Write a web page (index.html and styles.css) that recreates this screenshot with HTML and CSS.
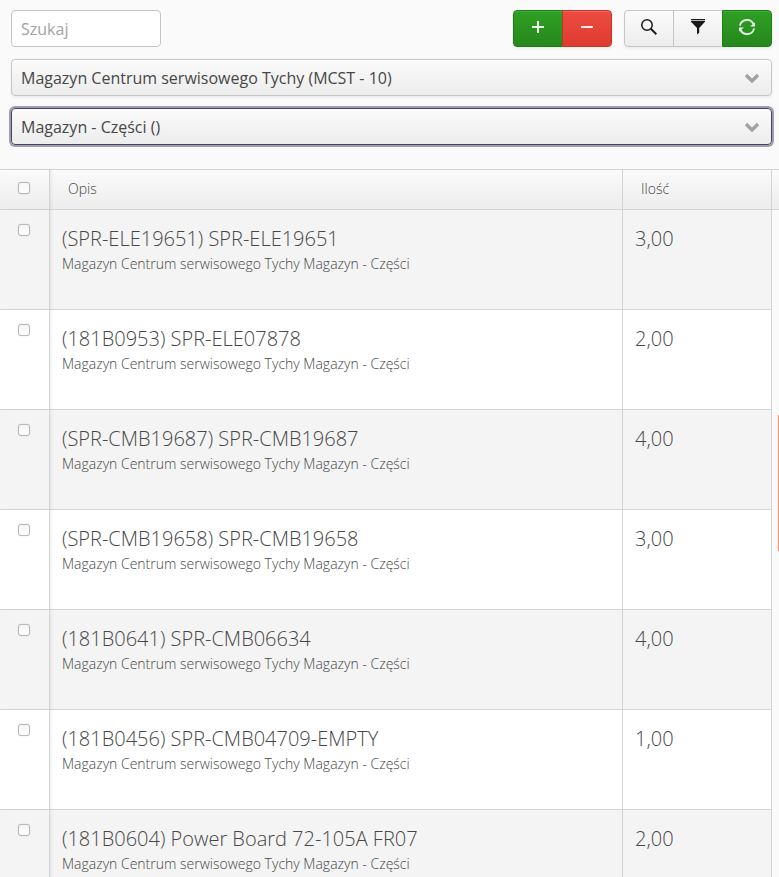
FILE: index.html
```html
<!DOCTYPE html>
<html lang="pl">

<head>
    <meta charset="UTF-8">
    <meta name="viewport" content="width=device-width, initial-scale=1.0">
    <title>Magazyn</title>
    <link rel="stylesheet" href="styles.css">
</head>

<body>
    <div class="filters">
        <div class="toolbar">
            <input type="text" class="search" placeholder="Szukaj" aria-label="Szukaj">
            <div class="button-groups">
                <div class="button-group">
                    <button type="button" class="button friendly" aria-label="Dodaj">
                        <svg class="icon" viewBox="0 0 16 16"><path d="M8 2v12M2 8h12" fill="none" stroke="currentColor" stroke-width="2"/></svg>
                    </button>
                    <button type="button" class="button danger" aria-label="Usuń">
                        <svg class="icon" viewBox="0 0 16 16"><path d="M2 8h12" fill="none" stroke="currentColor" stroke-width="2"/></svg>
                    </button>
                </div>
                <div class="button-group">
                    <button type="button" class="button" aria-label="Wyszukaj">
                        <svg class="icon" viewBox="0 0 16 16"><circle cx="6" cy="6" r="5.2" fill="none" stroke="currentColor" stroke-width="1.5"/><path d="M9.8 9.8l5.6 5.4" fill="none" stroke="currentColor" stroke-width="2"/></svg>
                    </button>
                    <button type="button" class="button" aria-label="Filtruj">
                        <svg class="icon" viewBox="0 0 16 16"><path d="M1 0h14v1.2H1zM1 2h14v.8L9.2 9v4.8L7 15.5V9L1 2.8z" fill="currentColor"/></svg>
                    </button>
                    <button type="button" class="button friendly" aria-label="Odśwież">
                        <svg class="icon" viewBox="0 0 16 16"><path d="M.9 6.6A7.2 7.2 0 0 1 14.4 5M15.1 9.4A7.2 7.2 0 0 1 1.6 11" fill="none" stroke="currentColor" stroke-width="1.8"/><path d="M16 3.4v4h-5zM0 12.6v-4h5z" fill="currentColor"/></svg>
                    </button>
                </div>
            </div>
        </div>
        <div class="select-box">
            <select class="select" aria-label="Magazyn">
                <option>Magazyn Centrum serwisowego Tychy (MCST - 10)</option>
            </select>
            <svg class="chevron" viewBox="0 0 16 10"><path d="M2 2l6 6 6-6" fill="none" stroke="currentColor" stroke-width="3.4"/></svg>
        </div>
        <div class="select-box">
            <select class="select focused" aria-label="Lokalizacja">
                <option>Magazyn - Części ()</option>
            </select>
            <svg class="chevron" viewBox="0 0 16 10"><path d="M2 2l6 6 6-6" fill="none" stroke="currentColor" stroke-width="3.4"/></svg>
        </div>
    </div>

    <table class="grid">
        <thead>
            <tr>
                <th class="col-check"><input type="checkbox" class="checkbox" aria-label="Zaznacz wszystko"></th>
                <th class="col-name">Opis</th>
                <th class="col-amount">Ilość</th>
                <td class="col-end"></td>
            </tr>
        </thead>
        <tbody>
            <tr>
                <td class="col-check"><input type="checkbox" class="checkbox" aria-label="SPR-ELE19651"></td>
                <td><div class="title">(SPR-ELE19651) SPR-ELE19651</div><div class="place">Magazyn Centrum serwisowego Tychy Magazyn - Części</div></td>
                <td class="title">3,00</td>
            </tr>
            <tr>
                <td class="col-check"><input type="checkbox" class="checkbox" aria-label="SPR-ELE07878"></td>
                <td><div class="title">(181B0953) SPR-ELE07878</div><div class="place">Magazyn Centrum serwisowego Tychy Magazyn - Części</div></td>
                <td class="title">2,00</td>
            </tr>
            <tr>
                <td class="col-check"><input type="checkbox" class="checkbox" aria-label="SPR-CMB19687"></td>
                <td><div class="title">(SPR-CMB19687) SPR-CMB19687</div><div class="place">Magazyn Centrum serwisowego Tychy Magazyn - Części</div></td>
                <td class="title">4,00</td>
            </tr>
            <tr>
                <td class="col-check"><input type="checkbox" class="checkbox" aria-label="SPR-CMB19658"></td>
                <td><div class="title">(SPR-CMB19658) SPR-CMB19658</div><div class="place">Magazyn Centrum serwisowego Tychy Magazyn - Części</div></td>
                <td class="title">3,00</td>
            </tr>
            <tr>
                <td class="col-check"><input type="checkbox" class="checkbox" aria-label="SPR-CMB06634"></td>
                <td><div class="title">(181B0641) SPR-CMB06634</div><div class="place">Magazyn Centrum serwisowego Tychy Magazyn - Części</div></td>
                <td class="title">4,00</td>
            </tr>
            <tr>
                <td class="col-check"><input type="checkbox" class="checkbox" aria-label="SPR-CMB04709-EMPTY"></td>
                <td><div class="title">(181B0456) SPR-CMB04709-EMPTY</div><div class="place">Magazyn Centrum serwisowego Tychy Magazyn - Części</div></td>
                <td class="title">1,00</td>
            </tr>
            <tr>
                <td class="col-check"><input type="checkbox" class="checkbox" aria-label="Power Board 72-105A FR07"></td>
                <td><div class="title">(181B0604) Power Board 72-105A FR07</div><div class="place">Magazyn Centrum serwisowego Tychy Magazyn - Części</div></td>
                <td class="title">2,00</td>
            </tr>
        </tbody>
    </table>

    <div class="side-tab"></div>
</body>
</html>
```

FILE: styles.css
```css
* {
    box-sizing: border-box;
}

body {
    margin: 0;
    height: 100vh;
    overflow: hidden;
    background-color: #fafafa;
    color: #474747;
    font-family: "Open Sans", sans-serif;
    font-size: 16px;
    font-weight: 300;
}

.filters {
    display: flex;
    flex-direction: column;
    gap: 12px;
    padding: 10px 7px 24px 11px;
}

.toolbar {
    display: flex;
    justify-content: space-between;
}

.search {
    width: 150px;
    height: 37px;
    padding: 0 9px;
    border: 1px solid #c5c5c5;
    border-radius: 4px;
    background: white;
    color: #474747;
    font: 400 16px "Open Sans", sans-serif;
}

.search::placeholder {
    color: #a3a3a3;
}

.button-groups {
    display: flex;
    gap: 12px;
}

.button-group {
    display: flex;
    border-radius: 4px;
    box-shadow: 0 2px 3px rgba(0, 0, 0, 0.05);
}

.button {
    display: flex;
    justify-content: center;
    width: 50px;
    height: 37px;
    padding: 8px 0 0;
    border: 1px solid #c5c5c5;
    background: linear-gradient(to bottom, #fafafa 2%, #ededed 98%);
    box-shadow: inset 0 1px 0 white;
    color: #191919;
    cursor: pointer;
}

.button + .button {
    margin-left: -1px;
}

.button:first-child {
    border-radius: 4px 0 0 4px;
}

.button:last-child {
    border-radius: 0 4px 4px 0;
}

.button.friendly {
    border-color: #1c7e17;
    background: linear-gradient(to bottom, #2f9f24 2%, #26881c 98%);
    box-shadow: inset 0 1px 0 #41af37;
    color: #eaf4e9;
}

.button.danger {
    border-color: #bb382e;
    background: linear-gradient(to bottom, #ed4b3f 2%, #de3c31 98%);
    box-shadow: inset 0 1px 0 #f1685e;
    color: #fbeeed;
}

.icon {
    width: 16px;
    height: 16px;
}

.select-box {
    position: relative;
}

.select {
    display: block;
    appearance: none;
    width: 100%;
    height: 37px;
    padding: 0 40px 0 9px;
    border: 1px solid #c5c5c5;
    border-radius: 4px;
    background: linear-gradient(to bottom, #fafafa 2%, #ededed 98%);
    box-shadow: inset 0 1px 0 white, 0 2px 3px rgba(0, 0, 0, 0.05);
    color: #474747;
    font: 400 16px "Open Sans", sans-serif;
}

.select.focused {
    border-color: #46435f;
    box-shadow: 0 0 0 2px #a09eae;
}

.chevron {
    position: absolute;
    top: 14px;
    right: 12px;
    width: 16px;
    height: 10px;
    color: #a3a3a3;
    pointer-events: none;
}

.grid {
    width: 100%;
    table-layout: fixed;
    border-collapse: separate;
    border-spacing: 0;
}

.grid thead th,
.grid thead td {
    height: 41px;
    padding: 0 18px 2px;
    border-top: 1px solid #d4d4d4;
    border-right: 1px solid #d4d4d4;
    border-bottom: 1px solid #d4d4d4;
    background: linear-gradient(to bottom, #fafafa 2%, #ededed 98%);
    font-size: 14px;
    font-weight: 300;
    line-height: 20px;
    text-align: left;
}

.grid tbody td {
    height: 100px;
    padding: 14px 12px 0;
    border-right: 1px solid #d4d4d4;
    border-bottom: 1px solid #d4d4d4;
    background-color: white;
    vertical-align: top;
}

.grid tbody tr:nth-child(odd) td {
    background-color: #f4f4f4;
}

.grid .col-check {
    position: relative;
    width: 50px;
    padding: 14px 0 0 18px;
    box-shadow: 2px 0 2px rgba(0, 0, 0, 0.05);
    vertical-align: top;
}

.grid thead .col-check {
    padding-top: 12px;
}

.grid .col-amount {
    width: 149px;
}

.grid thead .col-end {
    width: 7px;
    padding: 0;
    border-right: none;
}

.checkbox {
    display: block;
    appearance: none;
    width: 12px;
    height: 12px;
    margin: 0;
    border: 1px solid #b8b8b8;
    border-radius: 3px;
    background: linear-gradient(to bottom, #f6f6f6, #fdfdfd);
    box-shadow: 0 0 1px rgba(0, 0, 0, 0.3);
}

.title {
    font-size: 20px;
    line-height: 30px;
}

.place {
    font-size: 14px;
    line-height: 20px;
}

/* collapsed panel handle at the window edge */
.side-tab {
    position: fixed;
    top: 415px;
    right: 0;
    width: 1px;
    height: 136px;
    background-color: #f6956c;
}
```
